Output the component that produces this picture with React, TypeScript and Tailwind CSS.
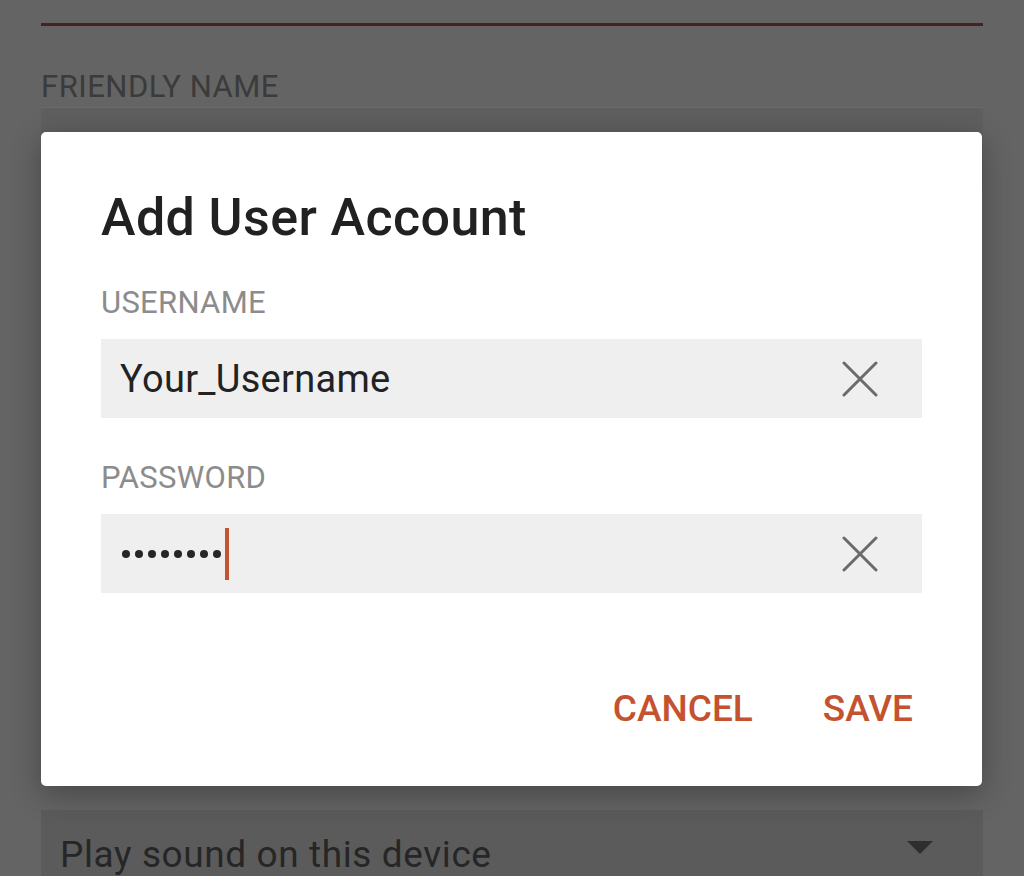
import { useState } from "react";

function ClearIcon() {
  return (
    <svg width="36" height="36" viewBox="0 0 36 36" fill="none" stroke="#6b6b6b" strokeWidth="3" strokeLinecap="round">
      <path d="M2 2 L34 34" />
      <path d="M34 2 L2 34" />
    </svg>
  );
}

function Field({ label, children, top }: { label: string; children: React.ReactNode; top: string }) {
  return (
    <div className={top}>
      <div className="text-[31px] leading-[36px] text-[#8c8c8c] tracking-[0.3px]">{label}</div>
      <div className="mt-[18px] h-[79px] bg-[#efefef] flex items-center pl-[19px] pr-[44px]">
        <div className="flex-1 flex items-center">{children}</div>
        <ClearIcon />
      </div>
    </div>
  );
}

export default function App() {
  const [username] = useState("Your_Username");
  const dots = Array.from({ length: 8 });

  return (
    <div className="relative w-full h-[876px] overflow-hidden bg-[#646464] font-['Roboto','Liberation_Sans',sans-serif]">
      {/* page behind the scrim */}
      <div className="px-[41px] pt-[23px]">
        <div className="h-[3px] bg-[#43221f]" />
        <div className="mt-[43px] text-[31px] leading-[36px] text-[#3b3b3b] tracking-[0.5px]">FRIENDLY NAME</div>
        <div className="mt-[2px] h-[80px] bg-[#5f5f5f] border-t border-[#6a6a6a]" />
        <div className="h-[623px]" />
        <div className="h-[80px] bg-[#5b5b5b] flex items-start pt-[24px] pl-[19px] pr-[50px]">
          <span className="flex-1 text-[37px] leading-[42px] text-[#262626] tracking-[0.6px]">Play sound on this device</span>
          <svg width="26" height="14" viewBox="0 0 26 14" className="mt-[7px]">
            <path d="M0 0 H26 L13 13 Z" fill="#2e2e2e" />
          </svg>
        </div>
      </div>

      {/* dialog */}
      <div className="absolute left-[41px] top-[132px] w-[941px] h-[654px] bg-white rounded-[5px] shadow-[0_8px_30px_rgba(0,0,0,0.3)] pl-[60px] pr-[60px] pt-[55px]">
        <h1 className="text-[52px] leading-[61px] font-medium text-[#212121] tracking-[0.4px]">Add User Account</h1>

        <Field label="USERNAME" top="mt-[37px]">
          <span className="text-[38px] leading-[42px] text-[#222222] tracking-[0.3px]">{username}</span>
        </Field>

        <Field label="PASSWORD" top="mt-[42px]">
          <div className="flex items-center gap-[5px] pl-[2px]">
            {dots.map((_, i) => (
              <span key={i} className="w-[8px] h-[8px] rounded-full bg-[#262626]" />
            ))}
          </div>
          <span className="ml-[4px] w-[4px] h-[52px] bg-[#c4512f]" />
        </Field>

        <div className="mt-[95px] flex justify-end gap-[70px] pr-[9px]">
          <button className="text-[37px] leading-[42px] font-medium text-[#c5522f]">CANCEL</button>
          <button className="text-[37px] leading-[42px] font-medium text-[#c5522f]">SAVE</button>
        </div>
      </div>
    </div>
  );
}
